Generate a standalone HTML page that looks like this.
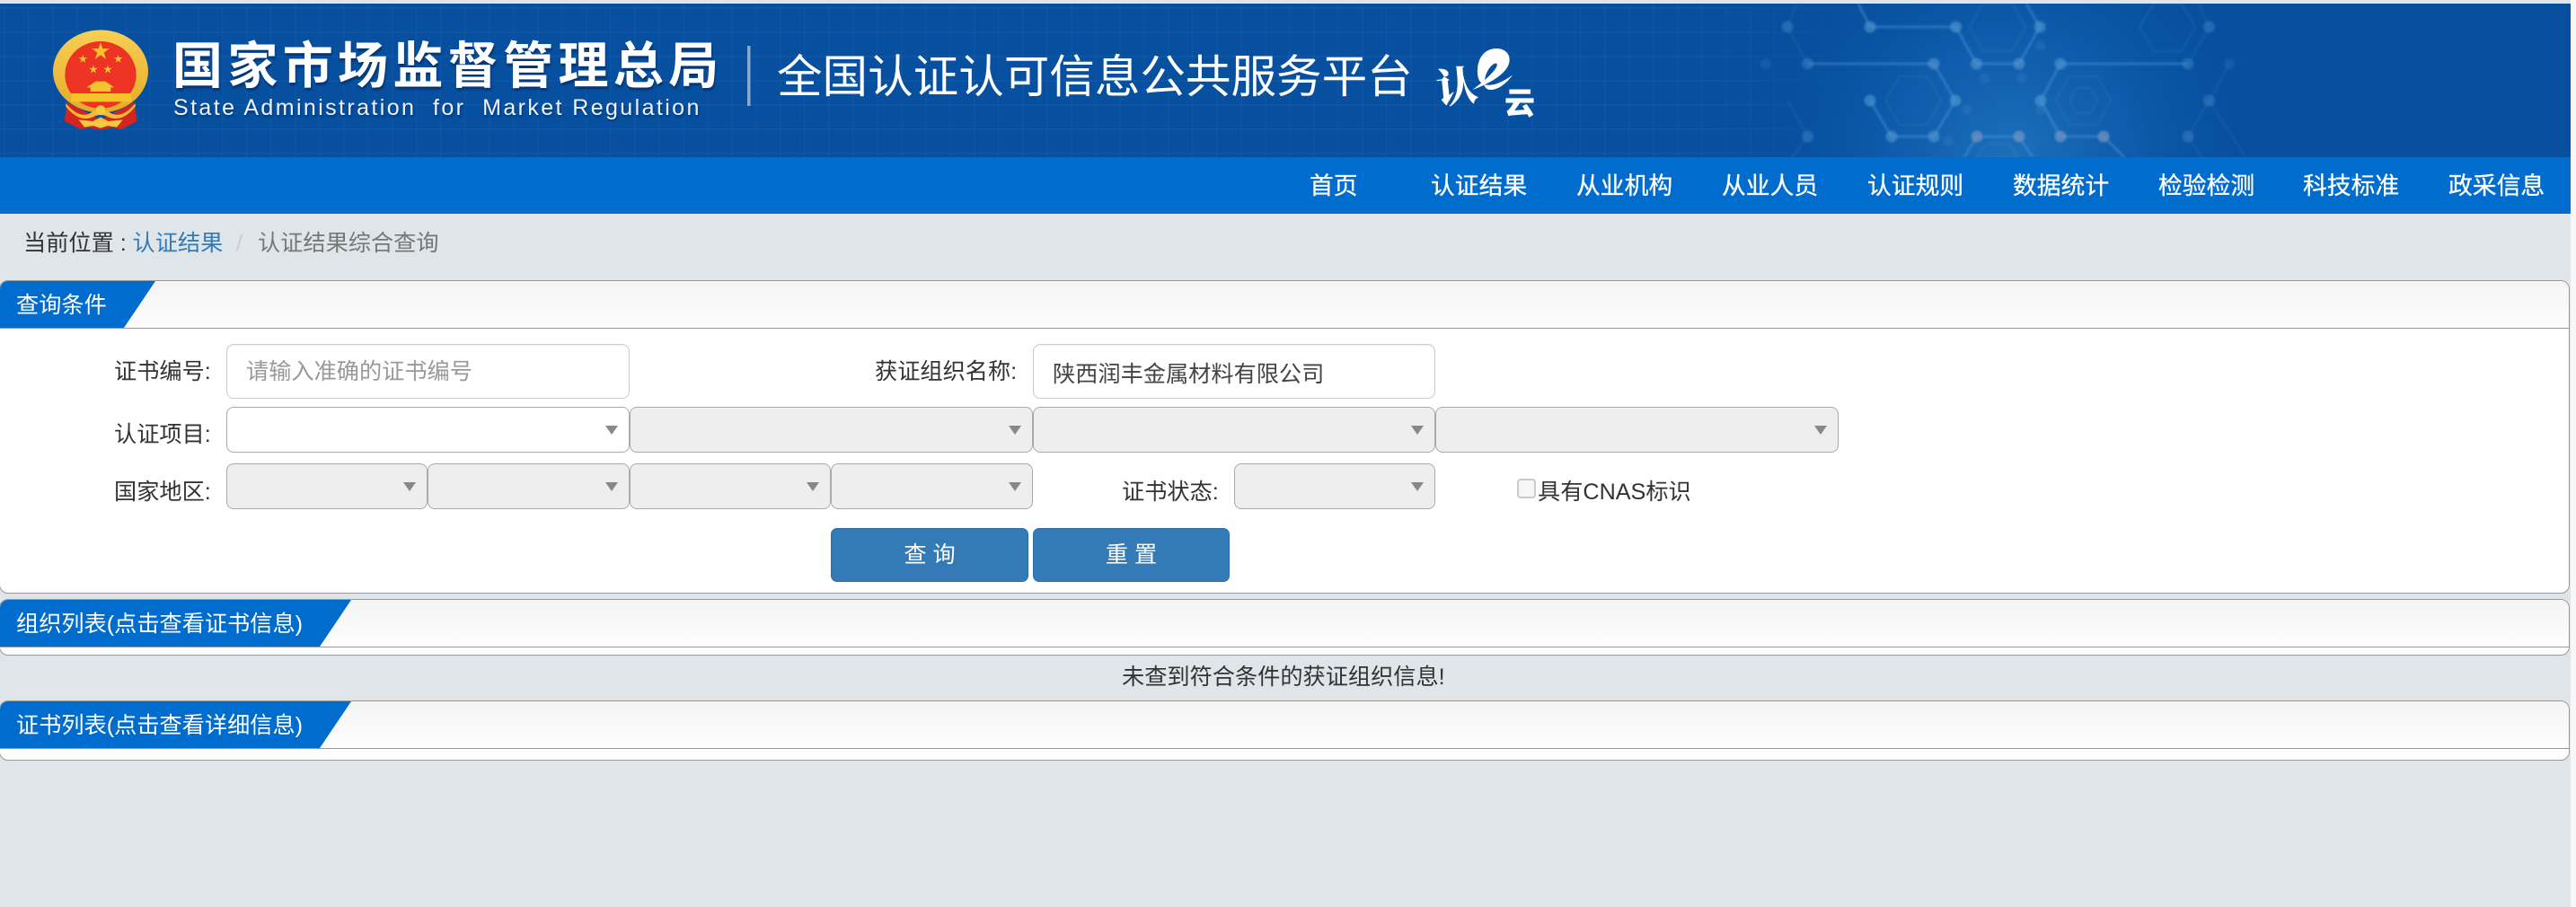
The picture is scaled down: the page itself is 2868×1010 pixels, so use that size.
<!DOCTYPE html>
<html lang="zh-CN">
<head>
<meta charset="utf-8">
<title>全国认证认可信息公共服务平台</title>
<style>
html,body{margin:0;padding:0;width:2868px;height:1010px;overflow:hidden;background:#e0e5e9;}
body{position:relative;font-family:"Liberation Sans","Noto Sans CJK SC",sans-serif;font-size:25.2px;color:#333;}
.a{position:absolute;}
.t{position:absolute;white-space:pre;height:40px;line-height:40px;margin-top:2px;}
.hdr{position:absolute;left:0;top:4px;width:2862px;height:171px;background:#07509f;overflow:hidden;}
.grid{position:absolute;left:0;top:0;width:2300px;height:171px;
 background-image:linear-gradient(to right,rgba(70,140,220,.09) 0,rgba(70,140,220,.09) 1.5px,transparent 1.5px),linear-gradient(to bottom,rgba(70,140,220,.13) 0,rgba(70,140,220,.13) 1.5px,transparent 1.5px);
 background-size:27px 27px;background-position:4px 4px;
 -webkit-mask-image:linear-gradient(to right,#000 0,#000 1900px,transparent 2100px);mask-image:linear-gradient(to right,#000 0,#000 1900px,transparent 2100px);}
.nav{position:absolute;left:0;top:175px;width:2862px;height:63px;background:#006cce;}
.n{position:absolute;top:187px;height:40px;line-height:40px;font-size:26.8px;color:#fff;white-space:pre;-webkit-text-stroke:.3px #fff;}
.p{position:absolute;left:-1.5px;width:2862.5px;box-sizing:border-box;background:#fff;border:1.5px solid #999;border-radius:10px;overflow:hidden;}
.ph{position:absolute;left:0;top:0;right:0;height:53px;box-sizing:border-box;background:linear-gradient(to bottom,#f4f4f4,#fdfdfd);border-bottom:1.5px solid #999;}
.tab{position:absolute;left:0;top:0;height:52px;background:#006cce;}
.tt{position:absolute;left:18.5px;top:7px;line-height:40px;height:40px;color:#fff;white-space:pre;}
.inp{position:absolute;box-sizing:border-box;height:61px;top:383px;border:1.5px solid #ccc;border-radius:8px;background:#fff;box-shadow:inset 0 1px 2px rgba(0,0,0,.075);padding:2px 21px 0;margin:0;outline:none;font:25.2px "Liberation Sans","Noto Sans CJK SC",sans-serif;color:#444;}
.inp::placeholder{color:#999;opacity:1;}
.s{position:absolute;box-sizing:border-box;height:51px;border:1.5px solid #aaa;border-radius:8px;background:#eee;}
.s.w{background:#fff;}
.s i{position:absolute;right:12px;top:20px;width:0;height:0;border-left:7px solid transparent;border-right:7px solid transparent;border-top:10px solid #888;}
.r2{top:453px;}.r3{top:516px;}
.b{position:absolute;top:588px;height:60px;box-sizing:border-box;background:#337ab7;border:1px solid #2e6da4;border-radius:7px;color:#fff;text-align:center;line-height:59px;white-space:pre;}
</style>
</head>
<body>
<div class="a" style="left:2862px;top:0;width:6px;height:1010px;background:#f7f7f7"></div>

<div class="hdr"><div class="grid"></div></div>
<svg class="a" style="left:0;top:0" width="2862" height="175" viewBox="0 0 2862 175">
<defs>
<radialGradient id="gl" gradientUnits="userSpaceOnUse" cx="2240" cy="175" r="270"><stop offset="0" stop-color="#2a86cc" stop-opacity=".6"/><stop offset=".5" stop-color="#1a6fc0" stop-opacity=".38"/><stop offset="1" stop-color="#0851a3" stop-opacity="0"/></radialGradient>
<linearGradient id="gold" x1="0" y1="0" x2="0" y2="1"><stop offset="0" stop-color="#f8cf55"/><stop offset="1" stop-color="#e7aa26"/></linearGradient>
<filter id="bl" x="-5%" y="-5%" width="110%" height="110%"><feGaussianBlur stdDeviation="1"/></filter>
<clipPath id="hc"><rect x="1900" y="4" width="800" height="171"/></clipPath>
</defs>
<rect x="1960" y="4" width="560" height="171" fill="url(#gl)"/>
<g clip-path="url(#hc)"><g filter="url(#bl)">
<g fill="none" stroke="#4f93d4" stroke-width="1.2" opacity=".28">
<polygon points="2193,30 2208,4 2240,4 2255,30 2240,57 2208,57"/>
<polygon points="2099,112 2115,85 2146,85 2161,112 2146,139 2115,139"/>
<polygon points="2288,112 2304,85 2335,85 2350,112 2335,139 2304,139"/>
<polygon points="2304,112 2312,98 2327,98 2335,112 2327,126 2312,126"/>
<polygon points="2382,30 2398,4 2429,4 2444,30 2429,57 2398,57"/>
<polygon points="2201,175 2212,160 2236,160 2247,175"/>
</g>
<g fill="none" stroke="#4f9ade" stroke-width="3" opacity=".42">
<path d="M2069 4L2082 30H2177.6L2200.5 71H2248L2271 30L2256 4"/>
<path d="M2012.7 71H2153L2177 112L2153 152H2106L2082 112"/>
<path d="M2436 71H2294L2272 112L2294 152H2342L2365 175"/>
<path d="M2187 175L2201 152H2248L2263 175"/>
</g>
<g fill="none" stroke="#4f9ade" stroke-width="1.5" opacity=".2">
<path d="M1990 30L2012.7 71M1990 30L2000 4M2012.7 152L1990 112M2012.7 152L1995 175M2436 152L2459.5 112L2482 71M2459.5 112L2500 175M2436 152L2452 175M2459.5 30L2436 71M2459.5 30L2448 4"/>
</g>
<g fill="#5a9bd6" opacity=".55">
<circle cx="2082" cy="30" r="6.5"/><circle cx="2177.6" cy="30" r="6.5"/><circle cx="2271" cy="30" r="6.5"/>
<circle cx="2200.5" cy="71" r="6.5"/><circle cx="2248" cy="71" r="6.5"/><circle cx="2153" cy="71" r="6.5"/>
<circle cx="2177" cy="112" r="6.5"/><circle cx="2082" cy="112" r="6.5"/><circle cx="2106" cy="152" r="6.5"/>
<circle cx="2153" cy="152" r="6.5"/><circle cx="2294" cy="71" r="6.5"/><circle cx="2272" cy="112" r="6.5"/>
</g>
<g fill="#7c97c6" opacity=".65">
<circle cx="2201" cy="152" r="6.5"/><circle cx="2248" cy="152" r="6.5"/><circle cx="2294" cy="152" r="6.5"/><circle cx="2342" cy="152" r="6.5"/>
</g>
<g fill="#4a8bcb" opacity=".42">
<circle cx="2012.7" cy="71" r="6.5"/><circle cx="2436" cy="71" r="6.5"/><circle cx="2459.5" cy="112" r="6.5"/><circle cx="2436" cy="152" r="6.5"/>
<circle cx="2012.7" cy="152" r="6.5"/><circle cx="1990" cy="30" r="6.5"/><circle cx="2459.5" cy="30" r="6.5"/>
</g>
<g fill="#4a8bcb" opacity=".2">
<circle cx="1966" cy="71" r="6"/><circle cx="2482" cy="71" r="6"/><circle cx="2209.6" cy="87" r="6"/><circle cx="2251" cy="87" r="6"/>
<circle cx="2190" cy="122" r="6"/><circle cx="2169" cy="157" r="6"/><circle cx="2271.6" cy="51" r="6"/><circle cx="2272" cy="122" r="6"/>
</g>
</g></g>

<!-- emblem -->
<g transform="translate(40 20) scale(.3333)">
<path d="M104 282L95 345L150 372L178 366L216 374L256 366L285 372L338 345L328 282L216 340Z" fill="#d4241f"/>
<ellipse cx="216" cy="178" rx="159" ry="138" fill="url(#gold)"/>
<ellipse cx="216" cy="190" rx="119" ry="112" fill="#ec3324"/>
<g fill="#f7c32c">
<polygon transform="translate(216 112) scale(31)" points="0,-1 .2245,-.309 .951,-.309 .363,.118 .588,.809 0,.382 -.588,.809 -.363,.118 -.951,-.309 -.2245,-.309"/>
<polygon transform="translate(157 137) scale(15)" points="0,-1 .2245,-.309 .951,-.309 .363,.118 .588,.809 0,.382 -.588,.809 -.363,.118 -.951,-.309 -.2245,-.309"/>
<polygon transform="translate(275 137) scale(15)" points="0,-1 .2245,-.309 .951,-.309 .363,.118 .588,.809 0,.382 -.588,.809 -.363,.118 -.951,-.309 -.2245,-.309"/>
<polygon transform="translate(192 172) scale(15)" points="0,-1 .2245,-.309 .951,-.309 .363,.118 .588,.809 0,.382 -.588,.809 -.363,.118 -.951,-.309 -.2245,-.309"/>
<polygon transform="translate(240 172) scale(15)" points="0,-1 .2245,-.309 .951,-.309 .363,.118 .588,.809 0,.382 -.588,.809 -.363,.118 -.951,-.309 -.2245,-.309"/>
<path d="M185 222L200 212H232L247 222L262 232H250V246H182V232H168Z"/>
<rect x="118" y="252" width="200" height="28"/>
</g>
<path d="M100 285C130 322 160 332 185 316C200 304 232 304 247 316C272 332 302 322 332 285L332 296C300 336 268 344 240 330C225 322 207 322 192 330C164 344 132 336 100 296Z" fill="#f2bd33"/>
<path d="M143 340L190 345L216 332L242 345L290 340L270 365L240 360L216 368L192 360L162 365Z" fill="#f5c93f"/>
<circle cx="216" cy="308" r="16" fill="#f5c93f"/>
</g>

<!-- divider -->
<rect x="832" y="51" width="3.5" height="67" fill="#8aa9d2"/>

<!-- logo -->
<g transform="translate(1570 50) scale(.3333)" fill="#fff">
<path d="M288 12C245 12 222 50 225 95C226 115 235 130 248 132C248 112 254 90 266 76C276 64 286 58 290 64C294 74 268 106 208 150C268 128 312 100 326 72C342 42 325 12 288 12Z"/>
<path d="M342 100C320 132 290 152 265 150C255 148 250 142 246 132C272 140 310 125 342 100Z"/>
</g>
<text x="1599" y="113" font-family="'Noto Serif CJK SC',serif" font-weight="900" font-size="46" fill="#fff" transform="rotate(-6 1625 95)">认</text>
<text x="1675" y="127" font-family="'Noto Sans CJK SC',sans-serif" font-weight="900" font-size="34" fill="#fff">云</text>
</svg>

<div class="t" style="left:192px;top:33px;height:70px;line-height:70px;font-family:'Noto Sans CJK SC',sans-serif;font-weight:700;font-size:56px;letter-spacing:5.35px;color:#fff;text-shadow:1px 3px 2px rgba(0,30,80,.55)">国家市场监督管理总局</div>
<div class="t" style="left:193px;top:98px;font-size:25px;letter-spacing:2.4px;color:#eef3fa;text-shadow:1px 2px 2px rgba(0,30,80,.5)">State Administration  for  Market Regulation</div>
<div class="t" style="left:865px;top:44px;height:70px;line-height:70px;font-family:'Noto Sans CJK SC',sans-serif;font-size:50.55px;color:#fff">全国认证认可信息公共服务平台</div>

<div class="nav"></div>
<div class="n" style="left:1458px">首页</div>
<div class="n" style="left:1593px">认证结果</div>
<div class="n" style="left:1755px">从业机构</div>
<div class="n" style="left:1917px">从业人员</div>
<div class="n" style="left:2079px">认证规则</div>
<div class="n" style="left:2241px">数据统计</div>
<div class="n" style="left:2403px">检验检测</div>
<div class="n" style="left:2564px">科技标准</div>
<div class="n" style="left:2726px">政采信息</div>

<div class="t" style="left:26px;top:249px">当前位置 :</div>
<div class="t" style="left:147.5px;top:249px;color:#337ab7">认证结果</div>
<div class="t" style="left:263px;top:249px;color:#ccc">/</div>
<div class="t" style="left:287px;top:249px;color:#777">认证结果综合查询</div>

<!-- panel 1 -->
<div class="p" style="top:312px;height:349px">
 <div class="ph"></div>
 <div class="tab" style="width:173.5px;clip-path:polygon(0 0,173.5px 0,138.5px 100%,0 100%)"></div>
 <div class="tt">查询条件</div>
</div>
<div class="t" style="left:127px;top:392px">证书编号:</div>
<input class="inp" style="left:252px;width:449px" placeholder="请输入准确的证书编号">
<div class="t" style="left:974px;top:392px">获证组织名称:</div>
<input class="inp" style="left:1150px;width:448px" value="陕西润丰金属材料有限公司">

<div class="t" style="left:127px;top:462px">认证项目:</div>
<div class="s w r2" style="left:252px;width:449px"><i></i></div>
<div class="s r2" style="left:701px;width:449px"><i></i></div>
<div class="s r2" style="left:1150px;width:448px"><i></i></div>
<div class="s r2" style="left:1598px;width:449px"><i></i></div>

<div class="t" style="left:127px;top:526px">国家地区:</div>
<div class="s r3" style="left:252px;width:224px"><i></i></div>
<div class="s r3" style="left:476px;width:225px"><i></i></div>
<div class="s r3" style="left:701px;width:224px"><i></i></div>
<div class="s r3" style="left:925px;width:225px"><i></i></div>
<div class="t" style="left:1249px;top:526px">证书状态:</div>
<div class="s r3" style="left:1374px;width:224px"><i></i></div>
<div class="a" style="left:1689px;top:533px;width:21px;height:22px;box-sizing:border-box;border:2px solid #ccc;border-radius:4px;background:#f6f6f6"></div>
<div class="t" style="left:1712px;top:526px">具有CNAS标识</div>

<div class="b" style="left:925px;width:220px">查 询</div>
<div class="b" style="left:1150px;width:219px">重 置</div>

<!-- panel 2 -->
<div class="p" style="top:667px;height:63px">
 <div class="ph"></div>
 <div class="tab" style="width:391.5px;clip-path:polygon(0 0,391.5px 0,356.5px 100%,0 100%)"></div>
 <div class="tt">组织列表(点击查看证书信息)</div>
</div>
<div class="t" style="left:1249px;top:732px">未查到符合条件的获证组织信息!</div>

<!-- panel 3 -->
<div class="p" style="top:780px;height:67px">
 <div class="ph"></div>
 <div class="tab" style="width:391.5px;clip-path:polygon(0 0,391.5px 0,356.5px 100%,0 100%)"></div>
 <div class="tt">证书列表(点击查看详细信息)</div>
</div>
</body>
</html>
